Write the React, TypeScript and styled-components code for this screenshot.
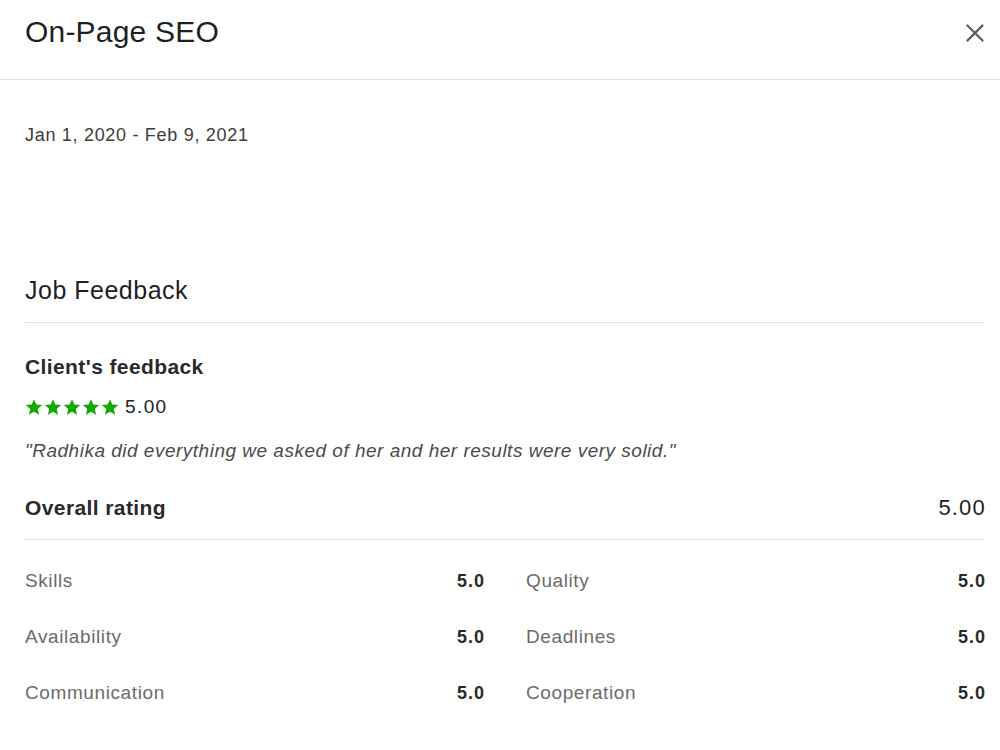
import React from 'react'
import styled, { createGlobalStyle } from 'styled-components'

const GlobalStyle = createGlobalStyle`
  html, body {
    margin: 0;
    padding: 0;
    background: #fff;
  }
  body {
    font-family: "Liberation Sans", Arial, sans-serif;
    color: #222;
  }
`

const Modal = styled.div`
  width: 1000px;
  height: 750px;
  background: #fff;
  overflow: hidden;
`

const Header = styled.div`
  height: 79px;
  border-bottom: 1px solid #e4e4e4;
  display: flex;
  align-items: flex-start;
  justify-content: space-between;
  padding: 0 12px 0 25px;
`

const Title = styled.h2`
  margin: 14px 0 0;
  font-size: 30px;
  font-weight: 400;
  line-height: 36px;
  letter-spacing: 0.2px;
  color: #1f1f1f;
`

const CloseButton = styled.button`
  margin-top: 20px;
  width: 26px;
  height: 26px;
  border: none;
  background: none;
  padding: 0;
  display: flex;
  align-items: center;
  justify-content: center;
  color: #5e5e5e;
  cursor: pointer;
`

const Body = styled.div`
  padding: 0 15px 0 25px;
`

const DateRange = styled.div`
  margin-top: 44px;
  font-size: 18px;
  line-height: 22px;
  letter-spacing: 0.7px;
  color: #3c3c3c;
`

const SectionTitle = styled.h3`
  margin: 129px 0 0;
  font-size: 25px;
  font-weight: 400;
  line-height: 30px;
  letter-spacing: 0.5px;
  padding-bottom: 17px;
  border-bottom: 1px solid #e0e0e0;
  color: #1f1f1f;
`

const SubTitle = styled.h4`
  margin: 0;
  font-size: 21px;
  font-weight: 700;
  letter-spacing: 0.4px;
  line-height: 26px;
  color: #2a2a2a;
`

const Feedback = styled.div`
  padding-top: 31px;
`

const StarRow = styled.div`
  margin-top: 15px;
  display: flex;
  align-items: center;
  gap: 6px;
  font-size: 19px;
  line-height: 24px;
  color: #222;
  letter-spacing: 1.4px;
`

const Stars = styled.div`
  display: flex;
  gap: 1px;
  color: #14a800;
`

const Quote = styled.p`
  margin: 20px 0 0;
  font-size: 19px;
  font-style: italic;
  line-height: 24px;
  letter-spacing: 0.5px;
  color: #4a4a4a;
`

const OverallRow = styled.div`
  margin-top: 32px;
  display: flex;
  justify-content: space-between;
  align-items: center;
  padding-bottom: 18px;
  border-bottom: 1px solid #e0e0e0;
`

const OverallValue = styled.span`
  font-size: 22px;
  letter-spacing: 1.2px;
  margin-right: -1px;
  color: #222;
`

const ScoreGrid = styled.div`
  display: grid;
  grid-template-columns: 1fr 1fr;
  column-gap: 42px;
  padding-top: 30px;
  row-gap: 34px;
`

const ScoreRow = styled.div`
  display: flex;
  justify-content: space-between;
  align-items: center;
  line-height: 22px;
`

const ScoreLabel = styled.span`
  font-size: 19px;
  letter-spacing: 0.6px;
  color: #6b6b6b;
`

const ScoreValue = styled.span`
  font-size: 18px;
  font-weight: 700;
  letter-spacing: 1px;
  margin-right: -1px;
  color: #2a2a2a;
`

const Star = () => (
  <svg width="18" height="18" viewBox="0 0 24 24" fill="currentColor">
    <path d="M12 1.5l3.1 7.2 7.8.7-5.9 5.2 1.8 7.7L12 18.3 5.2 22.3 7 14.6 1.1 9.4l7.8-.7z" />
  </svg>
)

const scores: [string, string][] = [
  ['Skills', '5.0'],
  ['Quality', '5.0'],
  ['Availability', '5.0'],
  ['Deadlines', '5.0'],
  ['Communication', '5.0'],
  ['Cooperation', '5.0'],
]

export default function App() {
  return (
    <>
      <GlobalStyle />
      <Modal>
        <Header>
          <Title>On-Page SEO</Title>
          <CloseButton aria-label="Close">
            <svg width="22" height="22" viewBox="0 0 24 24" fill="none" stroke="currentColor" strokeWidth="2.4" strokeLinecap="square">
              <path d="M4 4l16 16M20 4L4 20" />
            </svg>
          </CloseButton>
        </Header>
        <Body>
          <DateRange>Jan 1, 2020 - Feb 9, 2021</DateRange>
          <SectionTitle>Job Feedback</SectionTitle>
          <Feedback>
            <SubTitle>Client's feedback</SubTitle>
            <StarRow>
              <Stars>
                {[0, 1, 2, 3, 4].map((i) => (
                  <Star key={i} />
                ))}
              </Stars>
              5.00
            </StarRow>
            <Quote>"Radhika did everything we asked of her and her results were very solid."</Quote>
          </Feedback>
          <OverallRow>
            <SubTitle>Overall rating</SubTitle>
            <OverallValue>5.00</OverallValue>
          </OverallRow>
          <ScoreGrid>
            {scores.map(([label, value]) => (
              <ScoreRow key={label}>
                <ScoreLabel>{label}</ScoreLabel>
                <ScoreValue>{value}</ScoreValue>
              </ScoreRow>
            ))}
          </ScoreGrid>
        </Body>
      </Modal>
    </>
  )
}
